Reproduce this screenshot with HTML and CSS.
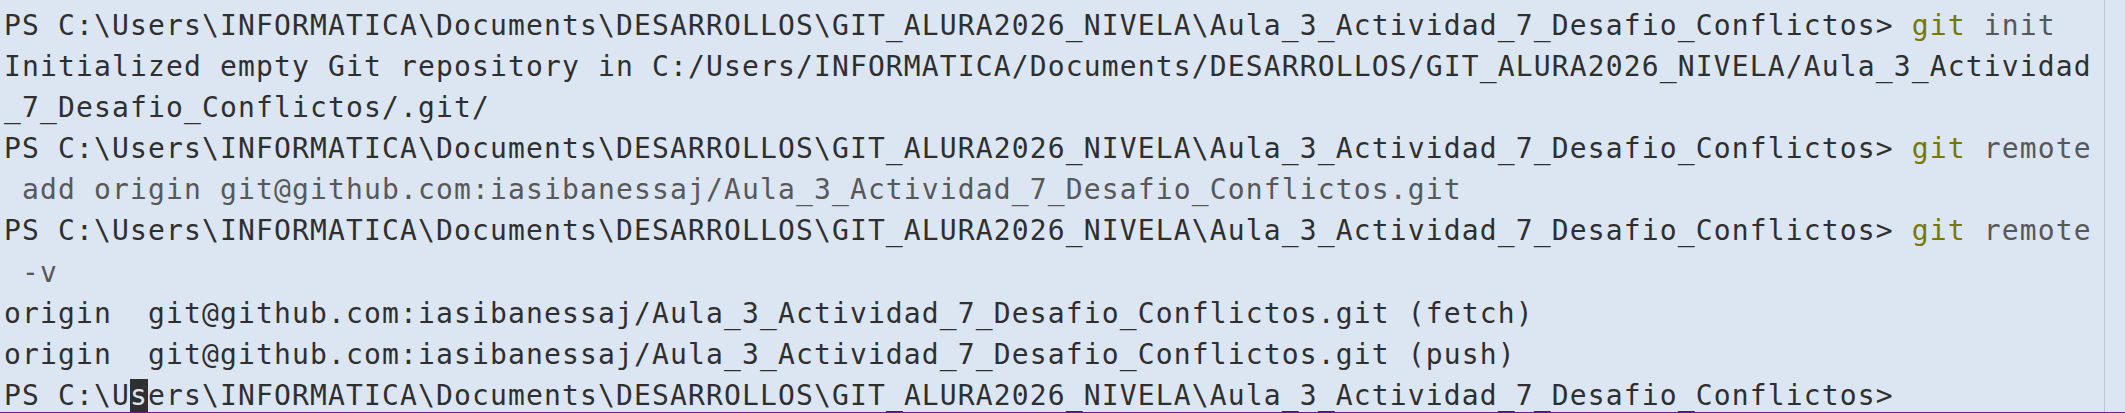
FILE: index.html
```html
<!DOCTYPE html>
<html lang="es">
<head>
<meta charset="utf-8">
<title>Terminal</title>
<link rel="stylesheet" href="styles.css">
</head>
<body>
<div class="window">
  <div class="terminal">
    <div class="line">PS C:\Users\INFORMATICA\Documents\DESARROLLOS\GIT_ALURA2026_NIVELA\Aula_3_Actividad_7_Desafio_Conflictos&gt; <span class="cmd">git</span> <span class="arg">init</span></div>
    <div class="line">Initialized empty Git repository in C:/Users/INFORMATICA/Documents/DESARROLLOS/GIT_ALURA2026_NIVELA/Aula_3_Actividad</div>
    <div class="line">_7_Desafio_Conflictos/.git/</div>
    <div class="line">PS C:\Users\INFORMATICA\Documents\DESARROLLOS\GIT_ALURA2026_NIVELA\Aula_3_Actividad_7_Desafio_Conflictos&gt; <span class="cmd">git</span> <span class="arg">remote</span></div>
    <div class="line"><span class="arg"> add origin git@github.com:iasibanessaj/Aula_3_Actividad_7_Desafio_Conflictos.git</span></div>
    <div class="line">PS C:\Users\INFORMATICA\Documents\DESARROLLOS\GIT_ALURA2026_NIVELA\Aula_3_Actividad_7_Desafio_Conflictos&gt; <span class="cmd">git</span> <span class="arg">remote</span></div>
    <div class="line"><span class="arg"> -v</span></div>
    <div class="line">origin  git@github.com:iasibanessaj/Aula_3_Actividad_7_Desafio_Conflictos.git (fetch)</div>
    <div class="line">origin  git@github.com:iasibanessaj/Aula_3_Actividad_7_Desafio_Conflictos.git (push)</div>
    <div class="line">PS C:\U<span class="cursor">s</span>ers\INFORMATICA\Documents\DESARROLLOS\GIT_ALURA2026_NIVELA\Aula_3_Actividad_7_Desafio_Conflictos&gt;</div>
  </div>
  <div class="scroll"></div>
</div>
</body>
</html>
```

FILE: styles.css
```css
html, body {
  margin: 0;
  padding: 0;
  background: #dce6f2;
}

body {
  width: 2125px;
  height: 413px;
  overflow: hidden;
}

.window {
  display: flex;
  height: 412px;
  border-bottom: 1px solid #6c1f8c;
  background: #dce6f2;
}

.terminal {
  width: 2100px;
  padding: 5px 0 0 4px;
  border-right: 1px solid #b9c5d3;
  font-family: "DejaVu Sans Mono", monospace;
  font-size: 28px;
  letter-spacing: 1.14px;
  line-height: 41.1px;
  color: #2f2f2f;
  overflow: hidden;
}

.line {
  white-space: pre;
  height: 41.1px;
}

.cmd {
  color: #7a7700;
}

.arg {
  color: #585858;
}

.cursor {
  background: #303030;
  color: #dce6f2;
}

.scroll {
  flex: 1;
}
```
